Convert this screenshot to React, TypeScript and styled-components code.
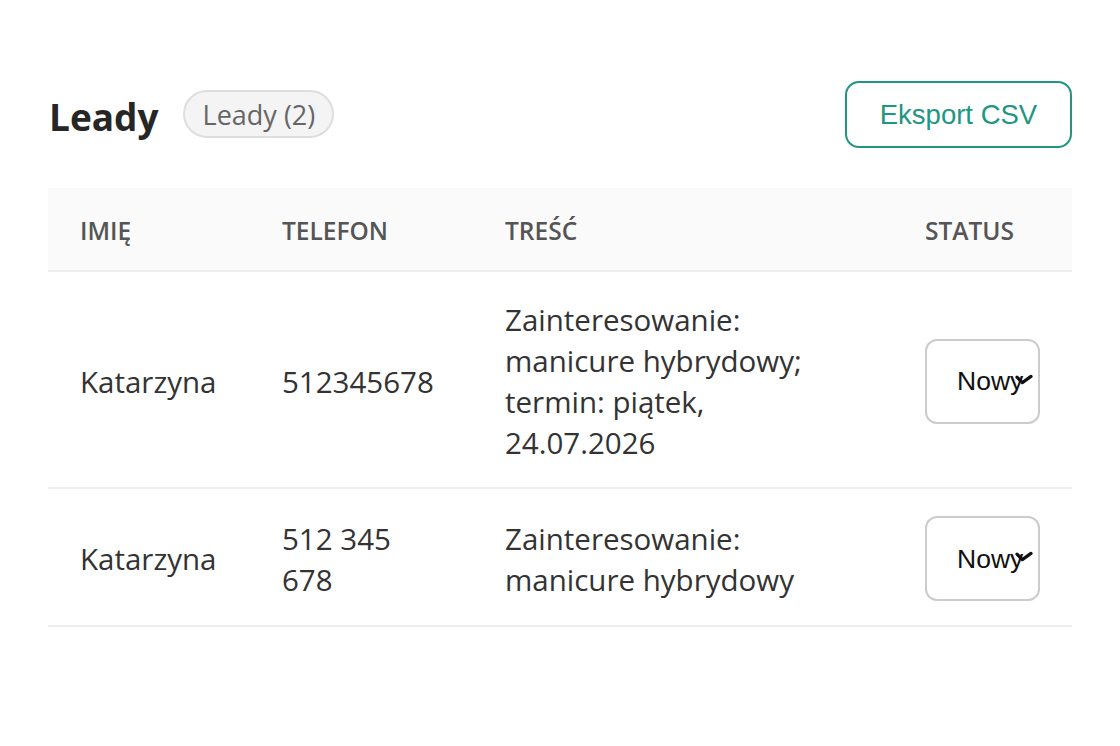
import React from 'react';
import styled, { createGlobalStyle } from 'styled-components';

const GlobalStyle = createGlobalStyle`
  html, body {
    margin: 0;
    padding: 0;
    background: #ffffff;
  }
  body {
    font-family: "Open Sans", "Noto Sans", sans-serif;
    color: #333333;
  }
`;

type Lead = {
  name: string
  phone: string
  content: string
  status: string
}

const leads: Lead[] = [
  {
    name: 'Katarzyna',
    phone: '512345678',
    content: 'Zainteresowanie: manicure hybrydowy; termin: piątek, 24.07.2026',
    status: 'Nowy',
  },
  {
    name: 'Katarzyna',
    phone: '512 345 678',
    content: 'Zainteresowanie: manicure hybrydowy',
    status: 'Nowy',
  },
];

const columns = [
  { label: 'Imię', width: 202 },
  { label: 'Telefon', width: 223 },
  { label: 'Treść', width: 420 },
  { label: 'Status', width: 179 },
];

const Chevron: React.FC = () => (
  <svg width="18" height="12" viewBox="0 0 18 12" fill="none">
    <path d="M2 3.2 L7.3 8.6 L16 2.4" stroke="#111" strokeWidth="3.2" strokeLinecap="round" strokeLinejoin="round" />
  </svg>
);

export default function App() {
  return (
    <>
      <GlobalStyle />
      <Page>
        <Header>
          <TitleGroup>
            <Title>Leady</Title>
            <CountBadge>Leady ({leads.length})</CountBadge>
          </TitleGroup>
          <ExportButton type="button">Eksport CSV</ExportButton>
        </Header>
        <Table>
          <colgroup>
            {columns.map((c) => (
              <col key={c.label} style={{ width: c.width }} />
            ))}
          </colgroup>
          <thead>
            <tr>
              {columns.map((c) => (
                <Th key={c.label}>{c.label}</Th>
              ))}
            </tr>
          </thead>
          <tbody>
            {leads.map((lead, i) => (
              <Row key={i}>
                <Td>{lead.name}</Td>
                <Td>{lead.phone}</Td>
                <Td>{lead.content}</Td>
                <Td>
                  <SelectWrap>
                    <StatusSelect defaultValue={lead.status}>
                      <option>Nowy</option>
                      <option>W toku</option>
                      <option>Zamknięty</option>
                    </StatusSelect>
                    <ChevronSlot>
                      <Chevron />
                    </ChevronSlot>
                  </SelectWrap>
                </Td>
              </Row>
            ))}
          </tbody>
        </Table>
      </Page>
    </>
  );
}

const Page = styled.div`
  padding: 81px 48px 0;
  box-sizing: border-box;
  width: 1120px;
`;

const Header = styled.div`
  display: flex;
  align-items: center;
  justify-content: space-between;
  margin-bottom: 40px;
`;

const TitleGroup = styled.div`
  display: flex;
  align-items: center;
  gap: 24px;
`;

const Title = styled.h1`
  margin: 0 0 0 1px;
  padding-top: 5px;
  font-size: 37px;
  font-weight: 700;
  color: #262626;
  line-height: 1.2;
`;

const CountBadge = styled.span`
  display: inline-flex;
  align-items: center;
  height: 48px;
  box-sizing: border-box;
  padding: 0 17px 0 18px;
  border: 2px solid #dedede;
  border-radius: 24px;
  background: #f4f4f4;
  color: #666666;
  font-size: 27px;
`;

const ExportButton = styled.button`
  width: 227px;
  height: 67px;
  border: 2px solid #1f9680;
  border-radius: 14px;
  background: #ffffff;
  color: #1f9680;
  font-family: "Liberation Sans", Arial, sans-serif;
  font-size: 27.5px;
  cursor: pointer;
`;

const Table = styled.table`
  width: 1024px;
  border-collapse: collapse;
  table-layout: fixed;
`;

const Th = styled.th`
  background: #fafafa;
  border-bottom: 2px solid #eeeeee;
  padding: 28px 34px 24px 32px;
  text-align: left;
  text-transform: uppercase;
  font-size: 24.5px;
  font-weight: 600;
  color: #555555;
  line-height: 30px;
`;

const Row = styled.tr`
  border-bottom: 2px solid #eeeeee;
`;

const Td = styled.td`
  padding: 27px 34px 24px 32px;
  vertical-align: middle;
  font-size: 29.5px;
  line-height: 41px;
  color: #333333;
`;

const SelectWrap = styled.div`
  position: relative;
  display: inline-block;
`;

const StatusSelect = styled.select`
  appearance: none;
  -webkit-appearance: none;
  width: 115px;
  height: 85px;
  box-sizing: border-box;
  padding: 0 0 0 30px;
  border: 2px solid #cccccc;
  border-radius: 12px;
  background: #ffffff;
  color: #111111;
  font-family: "Liberation Sans", Arial, sans-serif;
  font-size: 26.5px;
  display: block;
`;

const ChevronSlot = styled.span`
  position: absolute;
  left: 90px;
  top: 35px;
  pointer-events: none;
  display: flex;
`;
